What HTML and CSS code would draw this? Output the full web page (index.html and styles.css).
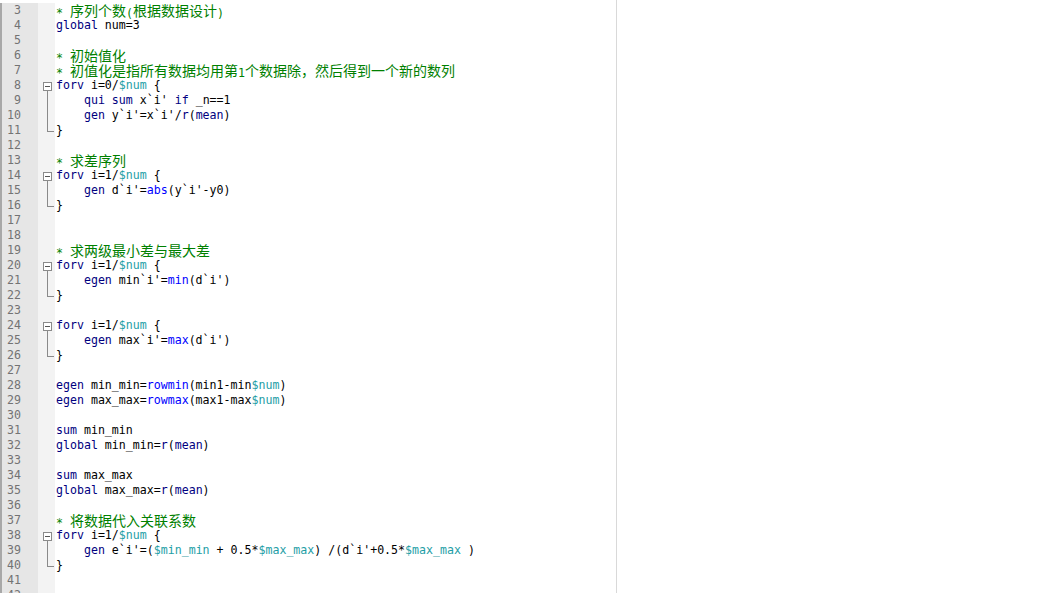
FILE: index.html
```html
<!DOCTYPE html>
<html>
<head>
<meta charset="utf-8">
<link rel="stylesheet" href="styles.css">
</head>
<body>
<div class="editor">
  <div class="row"><span class="num">3</span><span class="fold"></span><span class="code"><span class="cm">* <span class="zh">序列个数</span>(<span class="zh">根据数据设计</span>)</span></span></div>
  <div class="row"><span class="num">4</span><span class="fold"></span><span class="code"><span class="kw">global</span> num=3</span></div>
  <div class="row"><span class="num">5</span><span class="fold"></span><span class="code"></span></div>
  <div class="row"><span class="num">6</span><span class="fold"></span><span class="code"><span class="cm">* <span class="zh">初始值化</span></span></span></div>
  <div class="row"><span class="num">7</span><span class="fold"></span><span class="code"><span class="cm">* <span class="zh">初值化是指所有数据均用第</span>1<span class="zh">个数据除，然后得到一个新的数列</span></span></span></div>
  <div class="row"><span class="num">8</span><span class="fold start"><i class="box"></i><i class="down"></i></span><span class="code"><span class="kw">forv</span> i=0/<span class="mac">$num</span> {</span></div>
  <div class="row"><span class="num">9</span><span class="fold mid"><i class="vline"></i></span><span class="code">    <span class="kw">qui</span> <span class="kw">sum</span> x`i' <span class="kw">if</span> _n==1</span></div>
  <div class="row"><span class="num">10</span><span class="fold mid"><i class="vline"></i></span><span class="code">    <span class="kw">gen</span> y`i'=x`i'/<span class="kw">r</span>(<span class="kw">mean</span>)</span></div>
  <div class="row"><span class="num">11</span><span class="fold end"><i class="corner"></i></span><span class="code">}</span></div>
  <div class="row"><span class="num">12</span><span class="fold"></span><span class="code"></span></div>
  <div class="row"><span class="num">13</span><span class="fold"></span><span class="code"><span class="cm">* <span class="zh">求差序列</span></span></span></div>
  <div class="row"><span class="num">14</span><span class="fold start"><i class="box"></i><i class="down"></i></span><span class="code"><span class="kw">forv</span> i=1/<span class="mac">$num</span> {</span></div>
  <div class="row"><span class="num">15</span><span class="fold mid"><i class="vline"></i></span><span class="code">    <span class="kw">gen</span> d`i'=<span class="fn">abs</span>(y`i'-y0)</span></div>
  <div class="row"><span class="num">16</span><span class="fold end"><i class="corner"></i></span><span class="code">}</span></div>
  <div class="row"><span class="num">17</span><span class="fold"></span><span class="code"></span></div>
  <div class="row"><span class="num">18</span><span class="fold"></span><span class="code"></span></div>
  <div class="row"><span class="num">19</span><span class="fold"></span><span class="code"><span class="cm">* <span class="zh">求两级最小差与最大差</span></span></span></div>
  <div class="row"><span class="num">20</span><span class="fold start"><i class="box"></i><i class="down"></i></span><span class="code"><span class="kw">forv</span> i=1/<span class="mac">$num</span> {</span></div>
  <div class="row"><span class="num">21</span><span class="fold mid"><i class="vline"></i></span><span class="code">    <span class="kw">egen</span> min`i'=<span class="fn">min</span>(d`i')</span></div>
  <div class="row"><span class="num">22</span><span class="fold end"><i class="corner"></i></span><span class="code">}</span></div>
  <div class="row"><span class="num">23</span><span class="fold"></span><span class="code"></span></div>
  <div class="row"><span class="num">24</span><span class="fold start"><i class="box"></i><i class="down"></i></span><span class="code"><span class="kw">forv</span> i=1/<span class="mac">$num</span> {</span></div>
  <div class="row"><span class="num">25</span><span class="fold mid"><i class="vline"></i></span><span class="code">    <span class="kw">egen</span> max`i'=<span class="fn">max</span>(d`i')</span></div>
  <div class="row"><span class="num">26</span><span class="fold end"><i class="corner"></i></span><span class="code">}</span></div>
  <div class="row"><span class="num">27</span><span class="fold"></span><span class="code"></span></div>
  <div class="row"><span class="num">28</span><span class="fold"></span><span class="code"><span class="kw">egen</span> min_min=<span class="fn">rowmin</span>(min1-min<span class="mac">$num</span>)</span></div>
  <div class="row"><span class="num">29</span><span class="fold"></span><span class="code"><span class="kw">egen</span> max_max=<span class="fn">rowmax</span>(max1-max<span class="mac">$num</span>)</span></div>
  <div class="row"><span class="num">30</span><span class="fold"></span><span class="code"></span></div>
  <div class="row"><span class="num">31</span><span class="fold"></span><span class="code"><span class="kw">sum</span> min_min</span></div>
  <div class="row"><span class="num">32</span><span class="fold"></span><span class="code"><span class="kw">global</span> min_min=<span class="kw">r</span>(<span class="kw">mean</span>)</span></div>
  <div class="row"><span class="num">33</span><span class="fold"></span><span class="code"></span></div>
  <div class="row"><span class="num">34</span><span class="fold"></span><span class="code"><span class="kw">sum</span> max_max</span></div>
  <div class="row"><span class="num">35</span><span class="fold"></span><span class="code"><span class="kw">global</span> max_max=<span class="kw">r</span>(<span class="kw">mean</span>)</span></div>
  <div class="row"><span class="num">36</span><span class="fold"></span><span class="code"></span></div>
  <div class="row"><span class="num">37</span><span class="fold"></span><span class="code"><span class="cm">* <span class="zh">将数据代入关联系数</span></span></span></div>
  <div class="row"><span class="num">38</span><span class="fold start"><i class="box"></i><i class="down"></i></span><span class="code"><span class="kw">forv</span> i=1/<span class="mac">$num</span> {</span></div>
  <div class="row"><span class="num">39</span><span class="fold mid"><i class="vline"></i></span><span class="code">    <span class="kw">gen</span> e`i'=(<span class="mac">$min_min</span> + 0.5*<span class="mac">$max_max</span>) /(d`i'+0.5*<span class="mac">$max_max</span> )</span></div>
  <div class="row"><span class="num">40</span><span class="fold end"><i class="corner"></i></span><span class="code">}</span></div>
  <div class="row"><span class="num">41</span><span class="fold"></span><span class="code"></span></div>
  <div class="row"><span class="num">42</span><span class="fold"></span><span class="code"></span></div>
</div>
</body>
</html>
```
FILE: styles.css
```css
html, body {
  margin: 0;
  padding: 0;
  height: 100%;
  overflow: hidden;
  background: #ffffff;
}

.editor {
  padding-top: 3px;
  font-family: "DejaVu Sans Mono", "Liberation Mono", monospace;
  font-size: 11.6px;
  color: #000000;
  background: linear-gradient(to right, transparent 616px, #d9d9d9 616px, #d9d9d9 617px, transparent 617px);
  height: 100%;
}

.row {
  display: grid;
  grid-template-columns: 38px 17px 1fr;
  height: 15px;
  line-height: 15px;
}

.num {
  box-sizing: border-box;
  background: #e6e6e6;
  border-left: 2px solid #a8a8a8;
  color: #737373;
  text-align: right;
  padding-right: 17px;
}

.fold {
  background: #f3f3f3;
  display: flex;
  flex-direction: column;
}

.fold i {
  display: block;
  box-sizing: border-box;
}

.fold.start .box {
  width: 9px;
  height: 9px;
  margin: 4px 0 0 5px;
  border: 1px solid #8a8a8a;
  background: #ffffff;
  display: flex;
  align-items: center;
  justify-content: center;
}

.fold.start .box::before {
  content: "";
  display: block;
  width: 5px;
  height: 1px;
  background: #555555;
}

.fold.start .down {
  width: 1px;
  flex: 1;
  margin-left: 9px;
  background: #8a8a8a;
}

.fold.mid .vline {
  width: 1px;
  height: 15px;
  margin-left: 9px;
  background: #8a8a8a;
}

.fold.end .corner {
  width: 7px;
  height: 9px;
  margin-left: 9px;
  border-left: 1px solid #8a8a8a;
  border-bottom: 1px solid #8a8a8a;
}

.code {
  padding-left: 1px;
  white-space: pre;
  height: 15px;
}

.zh {
  font-family: "Noto Sans CJK SC", sans-serif;
  font-size: 14px;
  line-height: 14px;
  vertical-align: 1px;
}

.cm { color: #008000; }
.kw { color: #00007f; }
.fn { color: #0000ff; }
.mac { color: #1e9ea6; }
```
